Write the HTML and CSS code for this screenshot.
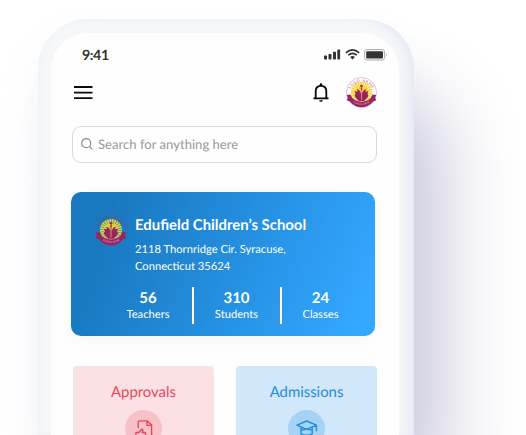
FILE: index.html
```
<!DOCTYPE html>
<html lang="en">
<head>
<meta charset="utf-8">
<title>School dashboard</title>
<link rel="stylesheet" href="styles.css">
</head>
<body>
<svg class="defs" width="0" height="0" aria-hidden="true">
  <defs>
    <path id="arc-top" d="M5.5 26 A18.5 18.5 0 0 1 42.5 26"/>
    <path id="arc-bottom" d="M7 36 Q24 51 41 36"/>
    <symbol id="crest" viewBox="0 0 48 48">
      <circle class="crest-ring" cx="24" cy="24" r="23.3"/>
      <circle class="crest-sun" cx="24" cy="24" r="16.6"/>
      <circle class="crest-rays" cx="24" cy="24" r="13.6"/>
      <path class="crest-mark" d="M23 16h2v9c2-5 4-6 6-6l-1 4 5-1-2 4c2 1 2 4 0 6l-5 5h-8l-5-5c-2-2-2-5 0-6l-2-4 5 1-1-4c2 0 4 1 6 6z"/>
      <circle class="crest-mark" cx="24" cy="14" r="2"/>
      <path class="crest-stem" d="M24 20v15"/>
      <path class="crest-mark" d="M1 28l6-1 3 6c8 7 20 7 28 0l3-6 6 1-2 4 2 4-5 2c-9 12-27 12-36 0l-5-2 2-4z"/>
      <text class="crest-name"><textPath href="#arc-top" startOffset="50%" text-anchor="middle">LOGO NAME</textPath></text>
      <text class="crest-motto"><textPath href="#arc-bottom" startOffset="50%" text-anchor="middle">SCHOOL NAME</textPath></text>
    </symbol>
  </defs>
</svg>
<div class="phone">
  <main class="screen">
    <div class="status">
      <span class="time">9:41</span>
      <div class="signals">
        <svg width="17" height="11" viewBox="0 0 17 11" fill="#333"><rect y="6.6" width="3" height="3.9" rx=".7"/><rect x="4.5" y="5" width="3" height="5.5" rx=".7"/><rect x="9" y="2.8" width="3" height="7.7" rx=".7"/><rect x="13.3" y=".4" width="2.8" height="10.1" rx=".7"/></svg>
        <svg width="15" height="11" viewBox="0 0 15 11" fill="none" stroke="#333" stroke-width="1.7"><path d="M.8 3.8Q7.5-2 14.2 3.8M3.2 6.2Q7.5 2.5 11.8 6.2"/><path d="M5.1 8Q7.5 6.2 9.9 8L7.5 10.5z" fill="#333" stroke="none"/></svg>
        <svg width="24" height="12" viewBox="0 0 24 12"><rect x=".6" y=".6" width="20" height="10.4" rx="2.4" fill="none" stroke="#aaa"/><rect x="2.2" y="2.2" width="16.8" height="7.2" rx="1" fill="#333"/><path d="M22 4.2q1.3 1.6 0 3.2z" fill="#999"/></svg>
      </div>
    </div>
    <header class="topbar">
      <svg width="19" height="14" viewBox="0 0 19 14" stroke="#0b0b10" stroke-width="1.9"><path d="M0 1h18.5M0 6.6h18.5M0 12.1h18.5"/></svg>
      <svg class="bell" width="16" height="20" viewBox="0 0 16 20"><path d="M.5 15.3h15M2.7 15V8.3C2.7 4.8 5 2.9 8 2.9s5.3 1.9 5.3 5.4V15" fill="none" stroke="#08080c" stroke-width="1.8"/><path d="M6.7 3V1.6a1.3 1.3 0 0 1 2.6 0V3zM6.2 17.2h3.6a1.8 1.6 0 0 1-3.6 0z" fill="#08080c"/></svg>
      <svg class="avatar" width="31" height="31"><use href="#crest"/></svg>
    </header>
    <div class="search">
      <svg width="12" height="12" viewBox="0 0 12 12" fill="none" stroke="#8c8c8c" stroke-width="1.2"><circle cx="5.2" cy="5.2" r="4.5"/><path d="M8.5 8.5l2.8 2.8"/></svg>
      <span>Search for anything here</span>
    </div>
    <section class="school">
      <div class="identity">
        <svg class="badge" width="32" height="32"><use href="#crest"/></svg>
        <div>
          <h1>Edufield Children’s School</h1>
          <p>2118 Thornridge Cir. Syracuse,<br>Connecticut 35624</p>
        </div>
      </div>
      <div class="stats">
        <div><b>56</b><span>Teachers</span></div>
        <div><b>310</b><span>Students</span></div>
        <div><b>24</b><span>Classes</span></div>
      </div>
    </section>
    <div class="tiles">
      <section class="tile approvals">
        <h2>Approvals</h2>
        <div class="disc"><svg width="18" height="20" viewBox="0 0 18 20" fill="none" stroke="#e8475b" stroke-width="1.4"><path d="M3.2 8V2.2Q3.2.9 4.5.9h7.8l4.3 4.2V18H9M12 1v4.4h4.4"/><path d="M1 12.5h3l2.6-3.2q1.6 0 1.1 2.2l-.4 1h2.5q1.2.3.8 1.8l-1 4.7H1z"/></svg></div>
      </section>
      <section class="tile admissions">
        <h2>Admissions</h2>
        <div class="disc"><svg width="22" height="18" viewBox="0 0 22 18" fill="none" stroke="#218ddd" stroke-width="1.4" stroke-linejoin="round"><path d="M1 5.2L10.6 1l9.8 4.2-9.8 4.1zM20.4 5.2v6M5 7.2v6.6q5.6 3 11.2 0V7.2M5 10.2q5.6-2 11.2 0"/></svg></div>
      </section>
    </div>
  </main>
</div>
</body>
</html>
```
FILE: styles.css
```
* { box-sizing: border-box; }
html { height: 435px; overflow: hidden; }
body {
  margin: 0;
  width: 526px;
  height: 435px;
  padding-top: 19px;
  overflow: hidden;
  background: #fff;
  font-family: Lato, sans-serif;
  text-rendering: geometricPrecision;
}
.defs { display: block; height: 0; }
svg { display: block; flex: none; }
h1, h2, p { margin: 0; font-weight: 400; }

.phone {
  width: 376px;
  height: 416px;
  margin-left: 38px;
  padding: 14px 15px 0 13px;
  border-radius: 50px 50px 0 0;
  background: #f5f7fa;
  box-shadow:
    inset -9px 1px 12px -5px #e1e7f0,
    inset 4px 0 8px -3px #eff2f7,
    42px 67px 80px -14px #c7c6db,
    -4px 20px 36px rgba(180, 195, 220, .12);
}
.screen {
  height: 402px;
  padding: 14px 22px 0 20px;
  border-radius: 37px 37px 0 0;
  background: #fefefe;
  overflow: hidden;
}

.status {
  display: flex;
  justify-content: space-between;
  height: 17px;
  margin-right: -11px;
  padding-left: 11px;
}
.time { font-size: 14.2px; line-height: 18px; font-weight: 700; color: #333; letter-spacing: -.4px; }
.signals { display: flex; gap: 4px; padding-top: 2px; }

.topbar {
  display: flex;
  align-items: center;
  height: 31px;
  margin-top: 13px;
  padding-left: 3px;
}
.bell { margin-left: auto; }
.avatar { margin-left: 17px; }

.search {
  display: flex;
  align-items: center;
  gap: 5px;
  width: 305px;
  height: 37px;
  margin: 18px 0 0 1px;
  padding: 0 0 1px 8px;
  border: 1px solid #d8d8d8;
  border-radius: 9px;
  color: #999;
  font-size: 13.1px;
}

.school {
  width: 304px;
  height: 144px;
  margin-top: 29px;
  padding-top: 21px;
  border-radius: 10px;
  color: #fff;
  background: linear-gradient(112deg, #1877be 11%, #2794e7 62%, #34a7ff 94%);
  box-shadow: 0 5px 20px rgba(0, 0, 0, .03);
}
.identity { display: flex; gap: 8px; padding-left: 24px; }
.badge { margin-top: 1px; }
.school h1 { font-size: 14.9px; line-height: 25px; font-weight: 700; }
.school p { margin-top: 3px; font-size: 11.2px; line-height: 17px; }
.stats {
  display: grid;
  grid-template-columns: 90px 88px 79px;
  height: 37px;
  margin: 12px 0 0 31px;
  text-align: center;
}
.stats div { padding-top: 2px; }
.stats div:first-child { padding-left: 2px; }
.stats div + div { border-left: 2px solid #fff; padding-right: 1px; }
.stats div:last-child { padding-right: 0; }
.stats b { display: block; font-size: 15px; line-height: 19px; }
.stats span { display: block; font-size: 11.2px; line-height: 14px; }

.tiles { display: flex; gap: 22px; margin: 30px 0 0 2px; }
.tile {
  display: flex;
  flex: none;
  flex-direction: column;
  align-items: center;
  width: 141px;
  height: 69px;
  padding-top: 16px;
  border-radius: 4px 4px 0 0;
  overflow: hidden;
}
.tile h2 { font-size: 14.9px; line-height: 20px; }
.disc {
  display: flex;
  flex: none;
  justify-content: center;
  width: 37px;
  height: 37px;
  margin-top: 8px;
  padding-top: 10px;
  border-radius: 50%;
}
.approvals { background: #fbe1e4; color: #e8475b; }
.approvals .disc { background: #f6c1c7; }
.admissions { background: #d1e7fa; color: #218ddd; }
.admissions .disc { background: #a6d2f4; }

.crest-ring { fill: var(--ring-fill, #fff); stroke: var(--ring-line, #c8a7b9); stroke-width: 1; }
.crest-sun { fill: var(--sun, #f8d43a); }
.crest-rays { fill: none; stroke: var(--ray, #fff); stroke-width: 6; stroke-dasharray: .9 2.66; }
.crest-mark { fill: #992363; }
.crest-stem { stroke: #f7cf54; stroke-width: 1; }
.crest-name { font-size: 5.8px; letter-spacing: .8px; fill: var(--name, #a65b80); }
.crest-motto { font-size: 3.8px; fill: #dcb5cb; }
.badge {
  --ring-fill: transparent;
  --ring-line: #65608f;
  --sun: #d9cf45;
  --ray: #2d80b0;
  --name: #76497f;
}
```
